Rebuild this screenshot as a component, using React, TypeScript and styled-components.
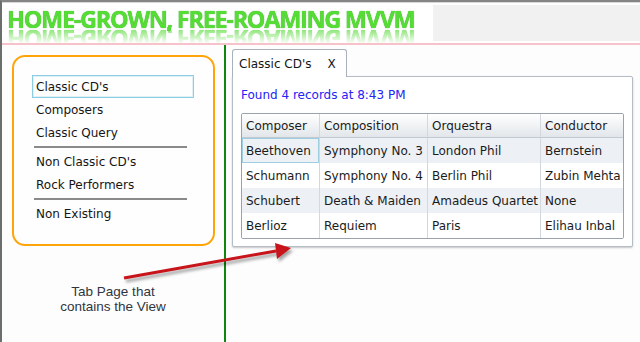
import React from "react";
import styled, { createGlobalStyle } from "styled-components";

const Global = createGlobalStyle`
  html, body { margin: 0; padding: 0; background: #ffffff; }
  #root { width: 640px; height: 342px; overflow: hidden; }
  * { box-sizing: border-box; }
`;

const Frame = styled.div`
  position: relative;
  width: 640px;
  height: 342px;
  display: flex;
  flex-direction: column;
  border-left: 2px solid #6b6f6b;
  border-top: 2px solid #858585;
  background: #fdfdfd;
  overflow: hidden;
  font-family: "DejaVu Sans", Verdana, sans-serif;
`;

const Header = styled.header`
  height: 41px;
  display: flex;
  background: #ffffff;
  border-top: 1px solid #d8d8d8;
`;

const TitleBox = styled.div`
  width: 431px;
  height: 40px;
  overflow: hidden;
  padding: 4px 0 0 5px;
`;

const Title = styled.h1`
  margin: 0;
  font-family: "Open Sans", sans-serif;
  font-weight: 700;
  font-size: 23.5px;
  line-height: 24px;
  letter-spacing: -1.3px;
  color: #55dc35;
  text-shadow: 0 0 1px #2b9a1c;
  white-space: nowrap;
  -webkit-box-reflect: below -4px linear-gradient(transparent 30%, rgba(255, 255, 255, 0.8));
`;

const HeaderFill = styled.div`
  flex: 1;
  margin: 2px 0 2px 0;
  background: #f1f1f1;
`;

const PinkRule = styled.div`
  height: 2px;
  background: #f8c2ca;
`;

const Body = styled.div`
  flex: 1;
  display: flex;
`;

const LeftColumn = styled.aside`
  width: 224px;
  display: flex;
  flex-direction: column;
  padding-top: 10px;
  border-right: 2px solid #0f870f;
`;

const OrangeBox = styled.nav`
  width: 203px;
  height: 191px;
  margin-left: 10px;
  border: 2px solid #ffa50a;
  border-radius: 13px;
  padding: 18px 0 0 18px;
  background: #fefefe;
`;

const MenuList = styled.div`
  width: 162px;
  display: flex;
  flex-direction: column;
`;

const MenuItem = styled.div<{ $selected?: boolean }>`
  height: 23px;
  display: flex;
  align-items: center;
  padding-left: 3px;
  font-size: 12px;
  color: #151515;
  border: 1px solid ${(p) => (p.$selected ? "#8ccde0" : "transparent")};
  box-shadow: ${(p) => (p.$selected ? "inset 0 0 0 1px #dff1f7" : "none")};
`;

const MenuSeparator = styled.div`
  height: 2px;
  margin: 2px 7px 2px 2px;
  background: #8a8a8a;
`;

const Caption = styled.p`
  margin: 38px 0 0 0;
  text-align: center;
  font-family: "Liberation Sans", Arial, sans-serif;
  font-size: 13.5px;
  line-height: 15px;
  color: #30353f;
`;

const RightColumn = styled.main`
  flex: 1;
  padding: 4px 0 0 6px;
`;

const TabStrip = styled.div`
  display: flex;
  position: relative;
  z-index: 1;
  margin-bottom: -1px;
`;

const Tab = styled.div`
  width: 115px;
  height: 28px;
  display: flex;
  align-items: center;
  padding-left: 6px;
  gap: 16px;
  font-size: 12px;
  color: #151515;
  background: #ffffff;
  border: 1px solid #a9b1ba;
  border-bottom: none;
  border-radius: 3px 3px 0 0;
`;

const TabClose = styled.span`
  font-size: 12px;
`;

const TabPanel = styled.section`
  width: 401px;
  height: 171px;
  background: #ffffff;
  border: 1px solid #b4bcc5;
  border-radius: 0 2px 2px 2px;
  box-shadow: 0 1px 2px rgba(0, 0, 0, 0.22);
  padding: 10px 0 0 8px;
`;

const Status = styled.div`
  font-size: 12px;
  line-height: 16px;
  color: #2323f5;
  margin-bottom: 10px;
`;

const DataGrid = styled.div`
  width: 383px;
  display: grid;
  grid-template-columns: 78px 108px 113px 1fr;
  border: 1px solid #9aa3ad;
  border-radius: 2px;
  overflow: hidden;
`;

const HeaderCell = styled.div<{ $last?: boolean }>`
  height: 24px;
  display: flex;
  align-items: center;
  padding-left: 4px;
  font-size: 12px;
  color: #1b1b1b;
  background: linear-gradient(#ffffff, #e2e6ea);
  border-bottom: 1px solid #c3c9d0;
  border-right: ${(p) => (p.$last ? "none" : "1px solid #d3d8de")};
`;

const Cell = styled.div<{ $alt?: boolean; $last?: boolean; $focus?: boolean }>`
  height: 25px;
  display: flex;
  align-items: center;
  padding-left: 4px;
  font-size: 12px;
  color: #1b1b1b;
  white-space: nowrap;
  background: ${(p) => (p.$alt ? "#edf1f6" : "#ffffff")};
  border-right: ${(p) => (p.$last ? "none" : "1px solid #d3d8de")};
  box-shadow: ${(p) => (p.$focus ? "inset 0 0 0 1px #9dcfe0" : "none")};
`;

const ArrowSvg = styled.svg`
  position: absolute;
  left: 118px;
  top: 236px;
  overflow: visible;
  filter: drop-shadow(2px 3px 1.5px rgba(0, 0, 0, 0.35));
`;

const columns = ["Composer", "Composition", "Orquestra", "Conductor"];
const rows = [
  ["Beethoven", "Symphony No. 3", "London Phil", "Bernstein"],
  ["Schumann", "Symphony No. 4", "Berlin Phil", "Zubin Mehta"],
  ["Schubert", "Death & Maiden", "Amadeus Quartet", "None"],
  ["Berlioz", "Requiem", "Paris", "Elihau Inbal"],
];

export default function App() {
  return (
    <>
      <Global />
      <Frame>
        <Header>
          <TitleBox>
            <Title>HOME-GROWN, FREE-ROAMING MVVM</Title>
          </TitleBox>
          <HeaderFill />
        </Header>
        <PinkRule />
        <Body>
          <LeftColumn>
            <OrangeBox>
              <MenuList>
                <MenuItem $selected>Classic CD's</MenuItem>
                <MenuItem>Composers</MenuItem>
                <MenuItem>Classic Query</MenuItem>
                <MenuSeparator />
                <MenuItem>Non Classic CD's</MenuItem>
                <MenuItem>Rock Performers</MenuItem>
                <MenuSeparator />
                <MenuItem>Non Existing</MenuItem>
              </MenuList>
            </OrangeBox>
            <Caption>
              Tab Page that
              <br />
              contains the View
            </Caption>
          </LeftColumn>
          <RightColumn>
            <TabStrip>
              <Tab>
                <span>Classic CD's</span>
                <TabClose>X</TabClose>
              </Tab>
            </TabStrip>
            <TabPanel>
              <Status>Found 4 records at 8:43 PM</Status>
              <DataGrid>
                {columns.map((c, i) => (
                  <HeaderCell key={c} $last={i === columns.length - 1}>
                    {c}
                  </HeaderCell>
                ))}
                {rows.map((r, ri) =>
                  r.map((v, ci) => (
                    <Cell
                      key={ri + "-" + ci}
                      $alt={ri % 2 === 0}
                      $last={ci === r.length - 1}
                      $focus={ri === 0 && ci === 0}
                    >
                      {v}
                    </Cell>
                  ))
                )}
              </DataGrid>
            </TabPanel>
          </RightColumn>
        </Body>
        <ArrowSvg width="176" height="46" viewBox="0 0 176 46">
          <line x1="4" y1="40" x2="156" y2="13" stroke="#c8141b" strokeWidth="3" />
          <polygon points="171,10 155,5 157,21" fill="#c8141b" />
        </ArrowSvg>
      </Frame>
    </>
  );
}
